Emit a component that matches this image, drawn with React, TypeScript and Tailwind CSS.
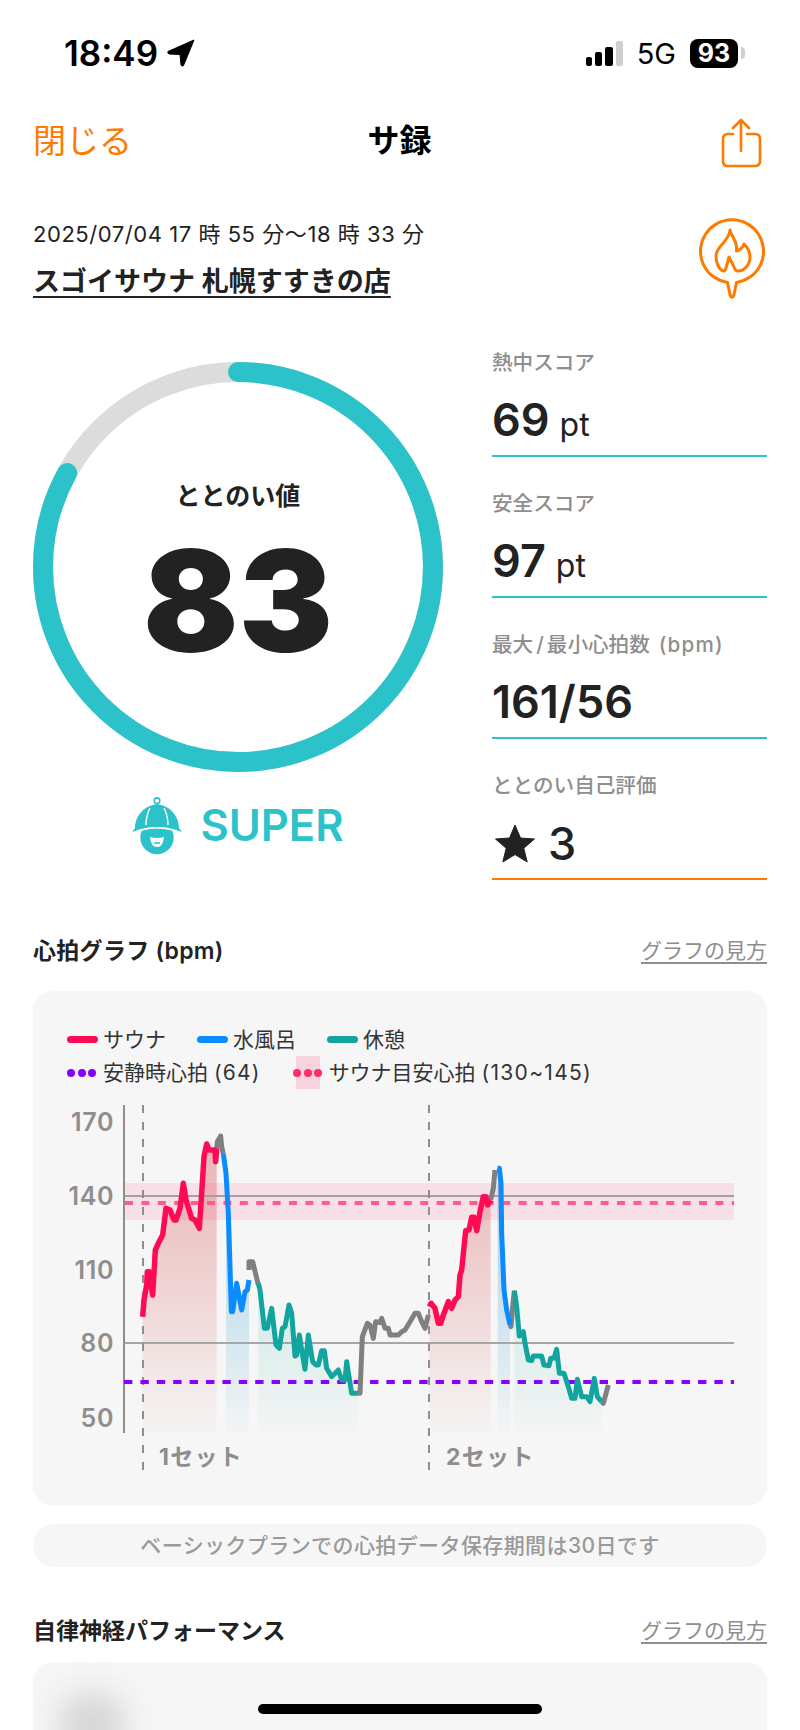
import type { ReactNode } from 'react';

type Point = [number, number];

// points were read from 3x crops, so each run keeps its crop origin
const crop = (ox: number, oy: number, points: Point[]): Point[] =>
  points.map(([x, y]) => [ox + x / 3, oy + y / 3]);

const sauna1: Point[] = [
  ...crop(30, 1280, [[338, 110], [342, 60], [350, 15]]),
  ...crop(30, 1000, [[352, 815], [358, 815], [368, 885], [376, 750], [385, 730], [398, 705], [408, 625], [420, 630], [432, 660], [438, 660], [450, 625], [460, 550], [468, 600], [485, 655], [495, 660], [508, 685], [515, 580], [522, 470], [530, 432], [537, 450], [555, 450], [557, 485], [560, 445]]),
];
const grey1 = crop(30, 1000, [[560, 445], [562, 425], [572, 408], [575, 440], [580, 462]]);
const water1: Point[] = [
  ...crop(30, 1000, [[580, 462], [588, 520], [595, 640], [600, 800]]),
  ...crop(30, 1280, [[604, 95], [608, 95], [620, 10], [635, 90], [645, 35], [652, 30], [657, 0]]),
];
const grey2 = crop(30, 1000, [[657, 810], [657, 785], [668, 785], [685, 855]]);
const rest1 = crop(30, 1280, [[685, 10], [690, 30], [703, 145], [712, 145], [725, 85], [738, 195], [748, 205], [757, 145], [765, 140], [777, 75], [785, 100], [795, 228], [800, 225], [808, 165], [815, 210], [825, 268], [835, 165], [848, 245], [858, 255], [865, 255], [875, 212], [883, 212], [890, 265], [905, 290], [925, 270], [935, 300], [945, 300], [950, 245], [965, 340], [985, 340]]);
const grey3 = crop(30, 1280, [[985, 340], [990, 340], [997, 170], [1012, 130], [1020, 135], [1030, 175], [1037, 125], [1050, 128], [1055, 115], [1065, 145], [1075, 145], [1080, 165], [1105, 165], [1115, 155], [1125, 150], [1140, 125], [1155, 100], [1165, 100], [1175, 125], [1185, 145], [1195, 105]]);
const sauna2 = crop(400, 1100, [[88, 620], [93, 610], [105, 625], [115, 670], [122, 670], [130, 645], [145, 605], [155, 625], [165, 600], [175, 590], [180, 525], [185, 510], [197, 392], [207, 390], [215, 352], [222, 352], [230, 392], [240, 335], [250, 290], [258, 290], [263, 315], [272, 300]]);
const grey4 = crop(400, 1100, [[272, 300], [280, 265], [285, 210]]);
const water2 = crop(400, 1100, [[293, 205], [298, 205], [303, 250], [305, 400], [312, 570], [320, 630], [330, 675]]);
const grey5 = crop(400, 1100, [[330, 675], [333, 680], [338, 620], [343, 572]]);
const rest2: Point[] = [
  ...crop(400, 1100, [[343, 572], [350, 620], [358, 708], [370, 695], [375, 730], [385, 780], [395, 782], [400, 768], [425, 768], [432, 795], [447, 797], [452, 775]]),
  ...crop(540, 1340, [[42, 55], [50, 28], [58, 100], [72, 100], [85, 140], [95, 175], [105, 175], [112, 118], [125, 170], [140, 170], [150, 185], [163, 115], [172, 170], [185, 185]]),
];
const grey6 = crop(540, 1340, [[185, 185], [190, 190], [205, 135]]);

const AREA_BOTTOM = 1433;

const toLine = (points: Point[]) => points.map(([x, y]) => `${x},${y}`).join(' ');
const toArea = (points: Point[]) =>
  `${toLine(points)} ${points[points.length - 1][0]},${AREA_BOTTOM} ${points[0][0]},${AREA_BOTTOM}`;

const AXIS_LABELS = [
  { label: '170', y: 1122 },
  { label: '140', y: 1196 },
  { label: '110', y: 1270 },
  { label: '80', y: 1343 },
  { label: '50', y: 1418 },
];

const METRICS: { label: ReactNode; value: string; unit: string }[] = [
  { label: '熱中スコア', value: '69', unit: 'pt' },
  { label: '安全スコア', value: '97', unit: 'pt' },
  {
    label: (
      <>
        最大<span className="mx-[3px]">/</span>最小心拍数
        <span className="ml-[9px] tracking-[1.2px]">(bpm)</span>
      </>
    ),
    value: '161/56',
    unit: ''
  },
];

function HeartRateChart() {
  return (
    <svg viewBox="33 1095 734 405" className="mt-[6px] block h-[405px] w-[734px]">
      <defs>
        <linearGradient id="saunaFill" gradientUnits="userSpaceOnUse" x1="0" y1="1150" x2="0" y2={AREA_BOTTOM}>
          <stop offset="0" stopColor="#e59a9a" stopOpacity="0.7" />
          <stop offset="1" stopColor="#e59a9a" stopOpacity="0.03" />
        </linearGradient>
        <linearGradient id="waterFill" gradientUnits="userSpaceOnUse" x1="0" y1="1150" x2="0" y2={AREA_BOTTOM}>
          <stop offset="0" stopColor="#7fc0e0" stopOpacity="0.75" />
          <stop offset="1" stopColor="#7fc0e0" stopOpacity="0.03" />
        </linearGradient>
        <linearGradient id="restFill" gradientUnits="userSpaceOnUse" x1="0" y1="1250" x2="0" y2={AREA_BOTTOM}>
          <stop offset="0" stopColor="#8fd6cc" stopOpacity="0.45" />
          <stop offset="1" stopColor="#8fd6cc" stopOpacity="0.03" />
        </linearGradient>
      </defs>

      <polygon points={toArea(sauna1)} fill="url(#saunaFill)" />
      <polygon points={toArea(water1.slice(1))} fill="url(#waterFill)" />
      <polygon points={toArea(rest1)} fill="url(#restFill)" />
      <polygon points={toArea(sauna2)} fill="url(#saunaFill)" />
      <polygon points={toArea(water2)} fill="url(#waterFill)" />
      <polygon points={toArea(rest2)} fill="url(#restFill)" />

      <rect x="125" y="1183" width="609" height="37" fill="#ff2d6b" fillOpacity="0.11" />
      <line x1="125" y1="1196" x2="734" y2="1196" stroke="#a3a0a2" strokeWidth="2" />
      <line x1="125" y1="1343" x2="734" y2="1343" stroke="#a6a6a6" strokeWidth="2" />
      <line x1="124" y1="1105" x2="124" y2="1433" stroke="#8e8e8e" strokeWidth="2" />
      <line x1="143" y1="1105" x2="143" y2="1476" stroke="#8f8f8f" strokeWidth="2" strokeDasharray="8 9" />
      <line x1="429" y1="1105" x2="429" y2="1476" stroke="#8f8f8f" strokeWidth="2" strokeDasharray="8 9" />
      <line x1="125" y1="1203" x2="734" y2="1203" stroke="#ff5c8a" strokeWidth="4" strokeDasharray="8 8.4" />
      <line x1="124" y1="1382" x2="734" y2="1382" stroke="#8a00ff" strokeWidth="4" strokeDasharray="8.4 8" />

      <g fill="none" strokeWidth="5" strokeLinejoin="round">
        <polyline points={toLine(grey1)} stroke="#808080" />
        <polyline points={toLine(grey2)} stroke="#808080" />
        <polyline points={toLine(grey3)} stroke="#808080" />
        <polyline points={toLine(grey4)} stroke="#808080" />
        <polyline points={toLine(grey5)} stroke="#808080" />
        <polyline points={toLine(grey6)} stroke="#808080" />
        <polyline points={toLine(sauna1)} stroke="#ff0a54" strokeWidth="5.5" />
        <polyline points={toLine(sauna2)} stroke="#ff0a54" strokeWidth="5.5" />
        <polyline points={toLine(water1)} stroke="#0a8cff" />
        <polyline points={toLine(water2)} stroke="#0a8cff" />
        <polyline points={toLine(rest1)} stroke="#12a5a0" />
        <polyline points={toLine(rest2)} stroke="#12a5a0" />
      </g>

      <g fill="#8e8e8e" fontSize="25" fontWeight="600" textAnchor="end" letterSpacing="0.6">
        {AXIS_LABELS.map((axis) => (
          <text key={axis.label} x="114" y={axis.y + 9}>
            {axis.label}
          </text>
        ))}
      </g>
      <g fill="#8e8e8e" fontSize="23" fontWeight="700" letterSpacing="1.3">
        <text x="159" y="1465">1セット</text>
        <text x="446" y="1465">2セット</text>
      </g>
    </svg>
  );
}

function LegendLine({ color, label }: { color: string; label: string }) {
  return (
    <div className="flex items-center gap-[5px]">
      <span className={`h-[7px] w-[31px] rounded-full ${color}`} />
      <span>{label}</span>
    </div>
  );
}

function Dots({ color }: { color: string }) {
  return (
    <span className="flex shrink-0 gap-[2.5px]">
      <span className={`h-[8px] w-[8px] rounded-full ${color}`} />
      <span className={`h-[8px] w-[8px] rounded-full ${color}`} />
      <span className={`h-[8px] w-[8px] rounded-full ${color}`} />
    </span>
  );
}

function StatusBar() {
  return (
    <div className="flex h-[106px] items-center justify-between pl-[64px] pr-[55px] text-black">
      <div className="flex items-center gap-[9px]">
        <span className="text-[35px] leading-none font-semibold">18:49</span>
        <svg width="28" height="28" viewBox="0 0 28 28">
          <path d="M27 1 L1 12.5 Q0 14 2 15 L13 15.5 L14 26 Q15 28 16.5 26.5 Z" fill="#000" stroke="#000" strokeLinejoin="round" />
        </svg>
      </div>
      <div className="flex items-center">
        <div className="flex h-[25px] items-end gap-[3px]">
          <span className="h-[9px] w-[6px] rounded-[2px] bg-black" />
          <span className="h-[14px] w-[7px] rounded-[2px] bg-black" />
          <span className="h-[19px] w-[8px] rounded-[2px] bg-black" />
          <span className="h-[25px] w-[7px] rounded-[2px] bg-[#cfcfcf]" />
        </div>
        <span className="ml-[14px] text-[29px] leading-none">5G</span>
        <div className="ml-[14px] flex h-[29px] w-[48px] items-center justify-center rounded-[8px] bg-black">
          <span className="text-[25px] leading-none font-bold text-white">93</span>
        </div>
        <span className="ml-[3px] h-[12px] w-[4px] rounded-r-full bg-[#cfcfcf]" />
      </div>
    </div>
  );
}

function ShareIcon() {
  return (
    <svg className="mt-[4px]" width="44" height="52" viewBox="0 0 44 52" fill="none" stroke="#ff7a00" strokeWidth="2.6" strokeLinecap="round" strokeLinejoin="round">
      <path d="M14 17 H9 Q4 17 4 22 V44 Q4 49 9 49 H36 Q41 49 41 44 V22 Q41 17 36 17 H28" />
      <path d="M22 34 V3 M14 11 L22 3 L30 11" />
    </svg>
  );
}

function SaunaMarker() {
  return (
    <svg width="70" height="82" viewBox="0 0 70 82" fill="none" stroke="#ff7a00" strokeWidth="3" strokeLinejoin="round">
      <path d="M30.5 64.4 A31.5 31.5 0 1 1 39.5 64.4 L36.8 77.5 Q35 81 33.2 77.5 Z" />
      <path d="M33 12 C35 20 41 24 39.5 33 C43 32 46 29 47 26 C51 30 53 34 53 39 C53 47 47 53 41 53 C39 53 38 52 37.5 50 L32 39 L29 50 C28.5 52 28 53 26.5 53 C22 52 19 45 19 38 C19 28 32 24 33 12 Z" />
    </svg>
  );
}

function ScoreRing() {
  return (
    <div className="relative h-[410px] w-[410px]">
      <svg viewBox="0 0 410 410" className="h-full w-full -rotate-90" fill="none" strokeWidth="20">
        <circle cx="205" cy="205" r="195" stroke="#dcdcdc" />
        <circle cx="205" cy="205" r="195" stroke="#2bc3c9" strokeLinecap="round" pathLength={100} strokeDasharray="83 100" />
      </svg>
      <div className="absolute inset-0 flex flex-col items-center text-[#222222]">
        <span className="mt-[116px] text-[25px] leading-[36px] font-semibold">ととのい値</span>
        <span className="mt-[11px] text-[141px] leading-[152px] font-black">83</span>
      </div>
    </div>
  );
}

function SuperIcon() {
  return (
    <svg width="50" height="58" viewBox="0 0 50 58">
      <circle cx="25" cy="40.5" r="16.7" fill="#2bc3c9" />
      <path d="M18 40 Q25 42 32 40 Q31 50 25 50 Q19 50 18 40 Z" fill="#fff" />
      <path d="M22 46 H28" stroke="#2bc3c9" strokeWidth="1.6" />
      <circle cx="25" cy="3.7" r="2.8" fill="none" stroke="#2bc3c9" strokeWidth="1.6" />
      <path d="M25 7 C11 9 3 20 3 31 L0 35 C8 33 14 29 25 30 C36 29 42 33 50 35 L47 31 C47 20 39 9 25 7 Z" fill="#2bc3c9" />
      <path d="M0 36 C8 34 14 30 25 31 C36 30 42 34 50 36" fill="none" stroke="#fff" strokeWidth="1.6" />
      <path d="M18 11 C15 17 14 22 14 28 M32 11 C35 17 36 22 36 28" fill="none" stroke="#fff" strokeWidth="1.4" />
    </svg>
  );
}

function Metric({ label, value, unit }: { label: ReactNode; value: string; unit: string }) {
  return (
    <div className="mb-[32px] flex h-[109px] flex-col border-b-2 border-[#2bc3c9]">
      <span className="pt-[1px] text-[20.6px] leading-[28px] font-medium text-[#8e8e8e]">{label}</span>
      <div className="flex flex-1 items-baseline pt-[13px] text-[#222222]">
        <span className="text-[45px] leading-[60px] font-semibold">{value}</span>
        {unit ? <span className="ml-[10px] text-[32px]">{unit}</span> : null}
      </div>
    </div>
  );
}

export default function App() {
  return (
    <div className="relative h-[1730px] w-[800px] overflow-hidden bg-white font-[Inter,'Noto_Sans_CJK_JP',sans-serif]">
      <StatusBar />

      <div className="grid h-[70px] grid-cols-3 items-center pl-[33px] pr-[37px]">
        <span className="pt-[1px] text-[33px] text-[#ff7a00]">閉じる</span>
        <span className="pl-[3px] text-center text-[32px] font-bold text-black">サ録</span>
        <div className="flex justify-end">
          <ShareIcon />
        </div>
      </div>

      <div className="mt-[42px] flex items-start justify-between pl-[33px] pr-[33px] text-[#222222]">
        <div>
          <p className="text-[22px] leading-[32px] tracking-[0.55px]">2025/07/04 17 時 55 分〜18 時 33 分</p>
          <p className="mt-[14px] text-[27px] leading-[36px] font-semibold underline decoration-2 underline-offset-[5px]">
            スゴイサウナ 札幌すすきの店
          </p>
        </div>
        <SaunaMarker />
      </div>

      <div className="mt-[48px] flex justify-between pl-[33px] pr-[33px]">
        <div className="pt-[14px]">
          <ScoreRing />
          <div className="mt-[25px] flex items-center justify-center gap-[18px]">
            <SuperIcon />
            <span className="text-[43.5px] leading-none font-semibold text-[#2bc3c9]">SUPER</span>
          </div>
        </div>

        <div className="w-[275px]">
          {METRICS.map((metric) => (
            <Metric key={metric.value} {...metric} />
          ))}
          <div className="flex h-[109px] flex-col border-b-2 border-[#ff7a00]">
            <span className="pt-[1px] text-[20.6px] leading-[28px] font-medium text-[#8e8e8e]">ととのい自己評価</span>
            <div className="flex flex-1 items-center gap-[13px] pl-[3px] pt-[9px] text-[#222222]">
              <svg width="40" height="40" viewBox="0 0 40 40">
                <path d="M20 1 L25.5 14 L39.5 15 L28.8 24.2 L32.2 38 L20 30.6 L7.8 38 L11.2 24.2 L0.5 15 L14.5 14 Z" fill="#222222" stroke="#222222" strokeLinejoin="round" />
              </svg>
              <span className="text-[45px] leading-none font-medium">3</span>
            </div>
          </div>
        </div>
      </div>

      <div className="mt-[55px] flex h-[32px] items-center justify-between pl-[33px] pr-[33px]">
        <span className="text-[23px] font-semibold tracking-[0.3px] text-[#222222]">心拍グラフ (bpm)</span>
        <span className="text-[21px] text-[#8e8e8e] underline underline-offset-[4px]">グラフの見方</span>
      </div>

      <div className="mx-[33px] mt-[24px] h-[515px] rounded-[20px] bg-[#f6f6f6] pt-[32px]">
        <div className="pl-[34px] text-[21px] text-[#333333]">
          <div className="flex h-[33px] items-center gap-[31px]">
            <LegendLine color="bg-[#ff0a54]" label="サウナ" />
            <LegendLine color="bg-[#0a8cff]" label="水風呂" />
            <LegendLine color="bg-[#12a5a0]" label="休憩" />
          </div>
          <div className="flex h-[33px] items-center">
            <Dots color="bg-[#8a00ff]" />
            <span className="ml-[7px]">
              安静時心拍 <span className="tracking-[1.2px]">(64)</span>
            </span>
            <span className="ml-[35px] flex h-[33px] w-[24px] items-center justify-center bg-[#f7d3dd]">
              <Dots color="bg-[#ff2d6b]" />
            </span>
            <span className="ml-[9px]">
              サウナ目安心拍 <span className="tracking-[1.3px]">(130~145)</span>
            </span>
          </div>
        </div>
        <HeartRateChart />
      </div>

      <div className="mx-[33px] mt-[18px] flex h-[43px] items-center justify-center rounded-full bg-[#f6f6f6] text-[21px] font-medium tracking-[0.4px] text-[#9a9a9a]">
        ベーシックプランでの心拍データ保存期間は30日です
      </div>

      <div className="mt-[48px] flex h-[32px] items-center justify-between pl-[33px] pr-[33px]">
        <span className="text-[23px] font-semibold text-[#222222]">自律神経パフォーマンス</span>
        <span className="text-[21px] text-[#8e8e8e] underline underline-offset-[4px]">グラフの見方</span>
      </div>

      <div className="relative mx-[33px] mt-[15px] h-[200px] overflow-hidden rounded-[20px] bg-[#f6f6f6]">
        <div className="absolute left-[24px] top-[28px] h-[70px] w-[70px] rounded-full bg-[#d8d8d8] blur-[14px]" />
      </div>

      <div className="absolute bottom-[16px] left-[258px] h-[10px] w-[284px] rounded-full bg-black" />
    </div>
  );
}
